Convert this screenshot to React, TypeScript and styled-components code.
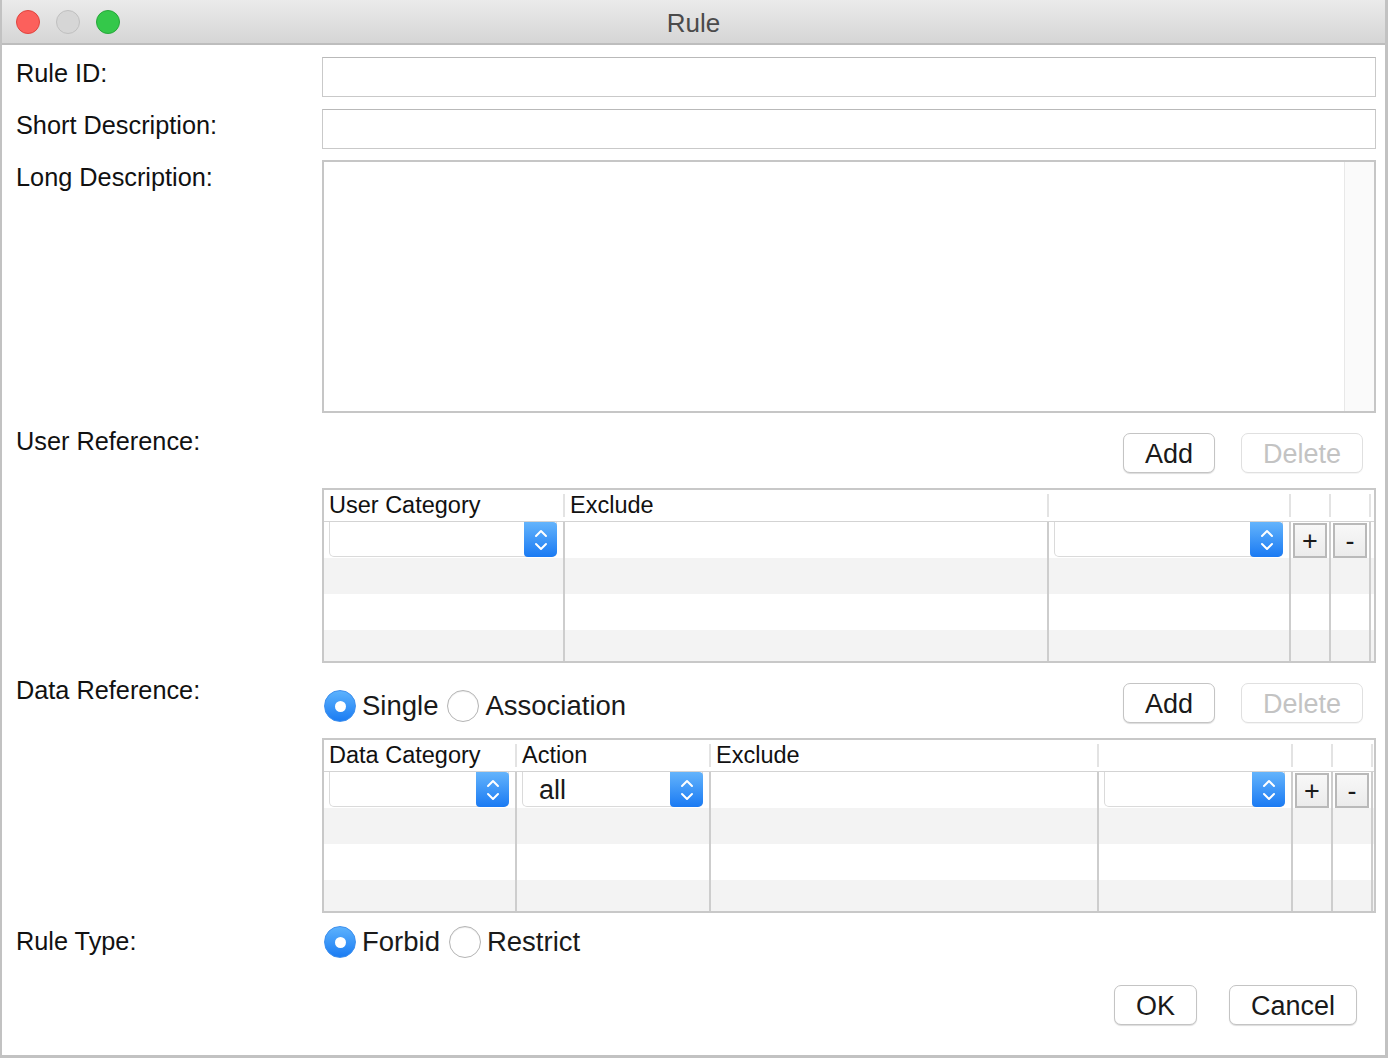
import React from "react";
import styled, { createGlobalStyle } from "styled-components";

const Global = createGlobalStyle`
  html, body { margin: 0; padding: 0; background: #fff; }
  body { font-family: "Liberation Sans", Arial, sans-serif; }
  * { box-sizing: border-box; }
`;

const Window = styled.div`
  width: 1388px;
  height: 1058px;
  background: #fff;
  border-left: 2px solid #c2c2c2;
  border-right: 3px solid #c2c2c2;
  border-bottom: 3px solid #c2c2c2;
  display: flex;
  flex-direction: column;
  overflow: hidden;
`;

const TitleBar = styled.div`
  height: 45px;
  flex: none;
  display: grid;
  grid-template-columns: 1fr auto 1fr;
  align-items: center;
  background: linear-gradient(#ebebeb, #d5d5d5);
  border-bottom: 2px solid #bdbdbd;
`;

const Lights = styled.div`
  display: flex;
  gap: 16px;
  padding-left: 14px;
`;

const Light = styled.span<{ $c: string; $b: string }>`
  width: 24px;
  height: 24px;
  border-radius: 50%;
  background: ${(p) => p.$c};
  border: 1px solid ${(p) => p.$b};
`;

const Title = styled.div`
  font-size: 26px;
  color: #4b4b4b;
  padding-top: 4px;
`;

const Content = styled.div`
  padding: 12px 9px 0 14px;
  display: flex;
  flex-direction: column;
`;

const Row = styled.div<{ $mt?: number }>`
  display: grid;
  grid-template-columns: 306px minmax(0, 1fr);
  margin-top: ${(p) => p.$mt ?? 0}px;
`;

const Label = styled.div<{ $pt?: number }>`
  font-size: 25.3px;
  line-height: 26px;
  padding-top: ${(p) => p.$pt ?? 3}px;
  color: #111;
  white-space: nowrap;
`;

const Input = styled.div`
  height: 40px;
  border: 1px solid #c9c9c9;
  border-top-color: #b9b9b9;
  background: #fff;
`;

const TextArea = styled.div`
  height: 253px;
  border: 2px solid #c6c6c6;
  display: flex;
  justify-content: flex-end;
  background: #fff;
`;

const ScrollTrack = styled.div`
  width: 30px;
  background: #fafafa;
  border-left: 1px solid #e8e8e8;
`;

const Right = styled.div`
  display: flex;
  flex-direction: column;
  min-width: 0;
`;

const Bar = styled.div<{ $pt: number }>`
  display: flex;
  justify-content: space-between;
  align-items: flex-start;
  padding-top: ${(p) => p.$pt}px;
  padding-right: 13px;
`;

const Spacer = styled.div``;

const Buttons = styled.div<{ $gap: number }>`
  display: flex;
  gap: ${(p) => p.$gap}px;
`;

const Button = styled.button<{ $disabled?: boolean }>`
  height: 40px;
  padding: 3px 21px 0;
  font-family: "Liberation Sans", Arial, sans-serif;
  font-size: 27px;
  line-height: 1;
  color: ${(p) => (p.$disabled ? "#c3c3c3" : "#1a1a1a")};
  background: #fff;
  border: 1px solid ${(p) => (p.$disabled ? "#e0e0e0" : "#c4c4c4")};
  border-radius: 7px;
  box-shadow: ${(p) => (p.$disabled ? "0 1px 0 rgba(0,0,0,0.04)" : "0 1px 1px rgba(0,0,0,0.14)")};
`;

const RadioGroup = styled.div<{ $mt: number }>`
  display: flex;
  align-items: center;
  gap: 9px;
  margin-top: ${(p) => p.$mt}px;
  padding-left: 2px;
`;

const RadioOption = styled.label`
  display: flex;
  align-items: center;
  gap: 6px;
  font-size: 27.5px;
  color: #1a1a1a;
`;

const RadioCircle = styled.span<{ $on?: boolean }>`
  width: 32px;
  height: 32px;
  border-radius: 50%;
  display: flex;
  align-items: center;
  justify-content: center;
  background: ${(p) => (p.$on ? "linear-gradient(#5cb2fd, #1b7cf3)" : "#fff")};
  border: 1px solid ${(p) => (p.$on ? "#3d8fee" : "#b4b4b4")};
  box-shadow: ${(p) => (p.$on ? "none" : "inset 0 1px 1px rgba(0,0,0,0.08)")};
  &::after {
    content: "";
    display: ${(p) => (p.$on ? "block" : "none")};
    width: 11px;
    height: 11px;
    border-radius: 50%;
    background: #fff;
  }
`;

const Table = styled.div`
  margin-top: 15px;
  border: 2px solid #c8c8c8;
  background: #fff;
  display: flex;
  flex-direction: column;
`;

const TRow = styled.div<{ $cols: string; $h: number; $alt?: boolean }>`
  display: grid;
  grid-template-columns: ${(p) => p.$cols};
  height: ${(p) => p.$h}px;
  background: ${(p) => (p.$alt ? "#f3f3f3" : "#fff")};
`;

const HeadRow = styled(TRow)`
  border-bottom: 1px solid #d3d3d3;
`;

const HeadCell = styled.div<{ $sep?: boolean }>`
  position: relative;
  font-size: 23.5px;
  color: #111;
  padding: 2px 0 0 5px;
  line-height: 26px;
  white-space: nowrap;
  min-width: 0;
  &::after {
    content: "";
    display: ${(p) => (p.$sep ? "block" : "none")};
    position: absolute;
    right: 0;
    top: 4px;
    bottom: 4px;
    width: 2px;
    background: #e3e3e3;
  }
`;

const Cell = styled.div<{ $sep?: boolean }>`
  border-right: ${(p) => (p.$sep ? "2px solid #cdcdcd" : "none")};
  display: flex;
  align-items: flex-start;
  min-width: 0;
`;

const Combo = styled.div`
  margin: 0 6px 0 5px;
  flex: 1;
  height: 35px;
  border: 1px solid #dadada;
  border-top: none;
  border-radius: 0 0 5px 5px;
  display: flex;
  align-items: center;
  background: #fff;
  min-width: 0;
`;

const ComboText = styled.span`
  flex: 1;
  font-size: 27px;
  color: #1a1a1a;
  padding-left: 16px;
  padding-top: 3px;
`;

const Stepper = styled.span`
  width: 33px;
  height: 35px;
  margin-right: -1px;
  align-self: flex-start;
  border-radius: 0 4px 5px 4px;
  background: linear-gradient(#64b4fc, #1a7af3);
  display: flex;
  align-items: center;
  justify-content: center;
`;

const PMButton = styled.div`
  margin: 1px 2px 0 2px;
  flex: 1;
  height: 35px;
  border: 2px solid #b9b9b9;
  background: linear-gradient(#f8f8f8, #ebebeb);
  display: flex;
  align-items: center;
  justify-content: center;
  font-size: 27px;
  color: #1a1a1a;
  padding-top: 2px;
`;

const Footer = styled.div`
  display: flex;
  justify-content: flex-end;
  gap: 32px;
  padding-right: 19px;
  margin-top: 27px;
`;

const Chevrons = () => (
  <svg width="16" height="26" viewBox="0 0 16 26">
    <path d="M3 9 L8 4 L13 9" fill="none" stroke="#fff" strokeWidth="2" strokeLinecap="round" strokeLinejoin="round" />
    <path d="M3 17 L8 22 L13 17" fill="none" stroke="#fff" strokeWidth="2" strokeLinecap="round" strokeLinejoin="round" />
  </svg>
);

type Col = { title: string; kind: "combo" | "empty" | "plus" | "minus" | "fill"; text?: string };

const DataTable = ({ cols, widths }: { cols: Col[]; widths: string }) => {
  const last = cols.length - 1;
  return (
    <Table>
      <HeadRow $cols={widths} $h={32}>
        {cols.map((c, i) => (
          <HeadCell key={i} $sep={i !== last}>
            {c.title}
          </HeadCell>
        ))}
      </HeadRow>
      {[36, 36, 36, 31].map((h, r) => (
        <TRow key={r} $cols={widths} $h={h} $alt={r % 2 === 1}>
          {cols.map((c, i) => (
            <Cell key={i} $sep={i !== last}>
              {r === 0 && c.kind === "combo" && (
                <Combo>
                  <ComboText>{c.text ?? ""}</ComboText>
                  <Stepper>
                    <Chevrons />
                  </Stepper>
                </Combo>
              )}
              {r === 0 && c.kind === "plus" && <PMButton>+</PMButton>}
              {r === 0 && c.kind === "minus" && <PMButton>-</PMButton>}
            </Cell>
          ))}
        </TRow>
      ))}
    </Table>
  );
};

const userCols: Col[] = [
  { title: "User Category", kind: "combo" },
  { title: "Exclude", kind: "empty" },
  { title: "", kind: "combo" },
  { title: "", kind: "plus" },
  { title: "", kind: "minus" },
  { title: "", kind: "fill" },
];

const dataCols: Col[] = [
  { title: "Data Category", kind: "combo" },
  { title: "Action", kind: "combo", text: "all" },
  { title: "Exclude", kind: "empty" },
  { title: "", kind: "combo" },
  { title: "", kind: "plus" },
  { title: "", kind: "minus" },
  { title: "", kind: "fill" },
];

export default function App() {
  return (
    <>
      <Global />
      <Window>
        <TitleBar>
          <Lights>
            <Light $c="#fc605c" $b="#e0443e" />
            <Light $c="#d6d6d6" $b="#c0c0c0" />
            <Light $c="#34c84a" $b="#27a73a" />
          </Lights>
          <Title>Rule</Title>
          <Spacer />
        </TitleBar>
        <Content>
          <Row>
            <Label $pt={3}>Rule ID:</Label>
            <Input />
          </Row>
          <Row $mt={12}>
            <Label $pt={3}>Short Description:</Label>
            <Input />
          </Row>
          <Row $mt={11}>
            <Label $pt={4}>Long Description:</Label>
            <TextArea>
              <ScrollTrack />
            </TextArea>
          </Row>
          <Row $mt={12}>
            <Label>User Reference:</Label>
            <Right>
              <Bar $pt={8}>
                <Spacer />
                <Buttons $gap={26}>
                  <Button>Add</Button>
                  <Button $disabled>Delete</Button>
                </Buttons>
              </Bar>
              <DataTable cols={userCols} widths="241px 484px 242px 40px 40px minmax(0, 1fr)" />
            </Right>
          </Row>
          <Row $mt={11}>
            <Label>Data Reference:</Label>
            <Right>
              <Bar $pt={9}>
                <RadioGroup $mt={7}>
                  <RadioOption>
                    <RadioCircle $on />
                    Single
                  </RadioOption>
                  <RadioOption>
                    <RadioCircle />
                    Association
                  </RadioOption>
                </RadioGroup>
                <Buttons $gap={26}>
                  <Button>Add</Button>
                  <Button $disabled>Delete</Button>
                </Buttons>
              </Bar>
              <DataTable cols={dataCols} widths="193px 194px 388px 194px 40px 40px minmax(0, 1fr)" />
            </Right>
          </Row>
          <Row $mt={12}>
            <Label>Rule Type:</Label>
            <RadioGroup $mt={1}>
              <RadioOption>
                <RadioCircle $on />
                Forbid
              </RadioOption>
              <RadioOption>
                <RadioCircle />
                Restrict
              </RadioOption>
            </RadioGroup>
          </Row>
          <Footer>
            <Button>OK</Button>
            <Button>Cancel</Button>
          </Footer>
        </Content>
      </Window>
    </>
  );
}
